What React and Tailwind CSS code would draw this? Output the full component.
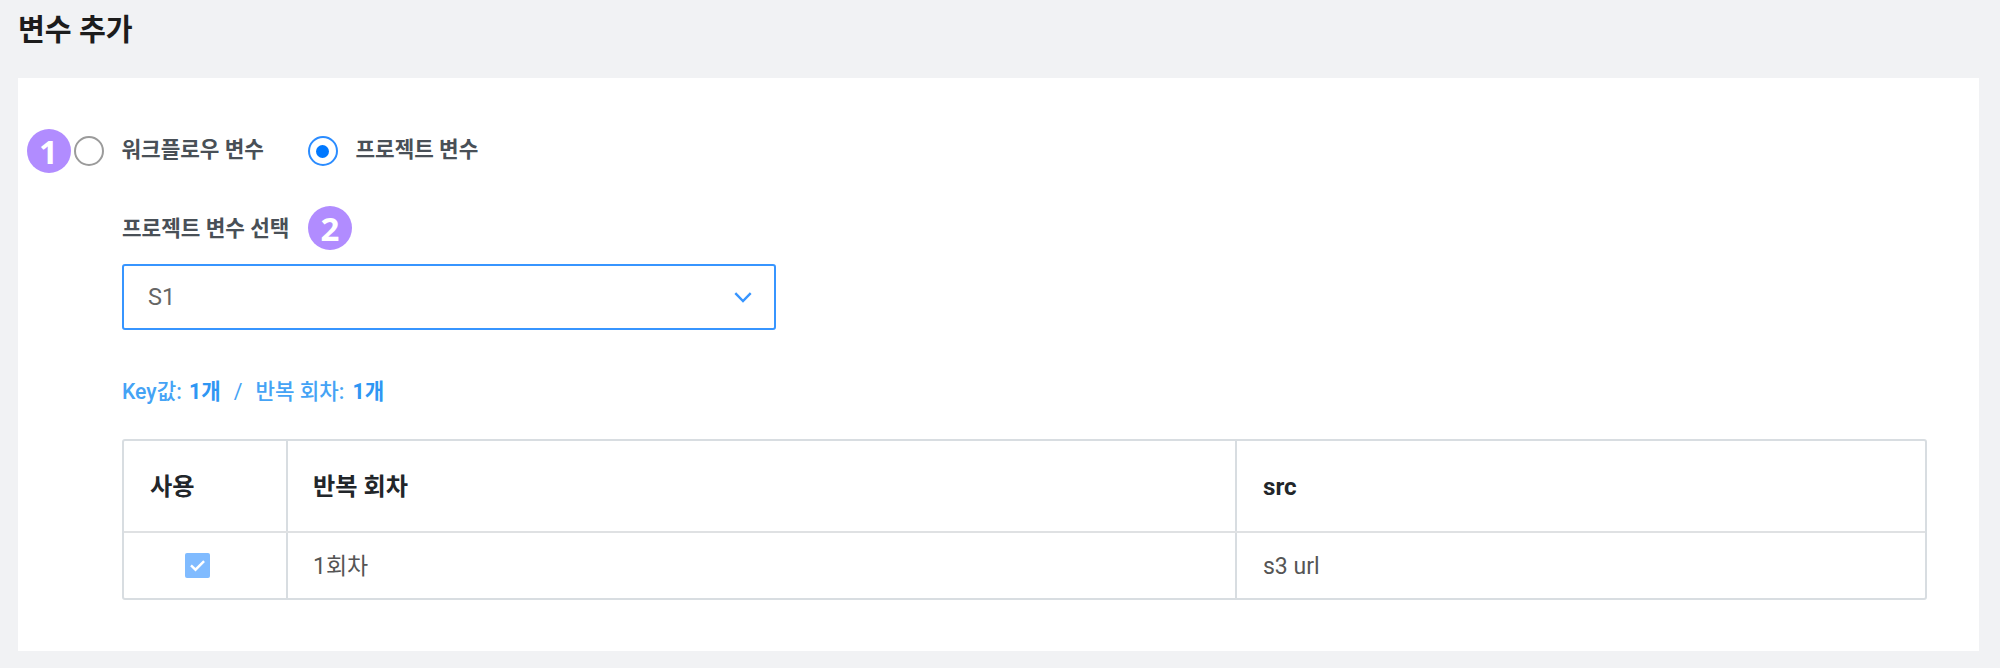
import React from "react";

function StepBadge({ children }) {
  return (
    <span className="flex size-11 shrink-0 items-center justify-center rounded-full bg-[#b18cff] pt-[2px] pr-[1px] font-['Noto_Sans','Open_Sans',sans-serif] text-[33px] leading-[42px] font-bold text-white">
      {children}
    </span>
  );
}

function Radio({ label, checked }) {
  return (
    <label className="flex items-center">
      <span
        className={
          checked
            ? "flex size-[30px] shrink-0 items-center justify-center rounded-full border-2 border-[#2b8cff]"
            : "flex size-[30px] shrink-0 items-center justify-center rounded-full border-2 border-[#9b9b9b]"
        }
      >
        {checked && <span className="size-[13px] rounded-full bg-[#0078ff]" />}
      </span>
      <span className="ml-[17.5px] pb-[3px] text-[21.3px] leading-8 font-bold whitespace-nowrap text-[#495057]">{label}</span>
    </label>
  );
}

export default function App() {
  return (
    <main className="h-[668px] w-[2000px] overflow-hidden bg-[#f1f2f4] pl-[18px] font-[Roboto,'Noto_Sans_CJK_KR',sans-serif]">
      <h1 className="flex h-[78px] items-start pt-[10px] text-[29.2px] leading-10 font-bold text-[#1c1c1c]">변수 추가</h1>
      <section className="h-[573px] w-[1961px] bg-white pt-[51px]">
        <div className="flex h-11 items-center pl-[9px]">
          <StepBadge>1</StepBadge>
          <div className="ml-[3px] flex gap-11">
            <Radio label="워크플로우 변수" />
            <Radio label="프로젝트 변수" checked />
          </div>
        </div>

        <div className="w-[1909px] pl-[104px]">
          <div className="mt-[33px] flex h-11 items-center">
            <span className="pt-[2px] text-[21.3px] leading-8 font-bold text-[#495057]">프로젝트 변수 선택</span>
            <span className="ml-[19px]">
              <StepBadge>2</StepBadge>
            </span>
          </div>

          <button className="mt-[14px] flex h-[66px] w-[654px] items-center justify-between rounded-[3px] border-2 border-[#3795ff] pr-[21px] pl-6">
            <span className="pb-[1px] text-[23.5px] leading-8 text-[#666666]">S1</span>
            <svg viewBox="0 0 20 20" className="size-5" fill="none" stroke="#3795ff" strokeWidth="2.4">
              <path d="M2.3 6.2 10 14l7.7-7.8" />
            </svg>
          </button>

          <p className="mt-[46px] flex h-8 items-center text-[21.2px] leading-8 font-medium whitespace-pre text-[#45a3f5]">
            <span>Key값: </span>
            <b className="ml-[2px] font-bold text-[#2e96f3]">1개</b>
            <span className="mx-[13px] font-normal">/</span>
            <span>반복 회차: </span>
            <b className="ml-[3px] font-bold text-[#2e96f3]">1개</b>
          </p>

          <div className="mt-[31px] h-[161px] w-[1805px] overflow-hidden rounded-[3px] border-2 border-[#d8dde1]">
            <div className="grid h-[92px] grid-cols-[164px_949px_1fr] border-b-2 border-[#dfe1e3] text-[24.2px] font-bold text-[#22262a]">
              <div className="flex items-center border-r-2 border-[#d8dde1] pt-[2px] pl-[26px]">사용</div>
              <div className="flex items-center border-r-2 border-[#d8dde1] pt-[2px] pl-[25px]">반복 회차</div>
              <div className="flex items-center pt-[3px] pl-[26px]">src</div>
            </div>
            <div className="grid h-[65px] grid-cols-[164px_949px_1fr] text-[23px] text-[#555555]">
              <div className="flex items-center justify-center border-r-2 border-[#d8dde1] pr-[15px]">
                <span className="flex size-[25px] items-center justify-center rounded-[2px] bg-[#80bbff]">
                  <svg viewBox="0 0 25 25" className="size-[25px]" fill="none" stroke="white" strokeWidth="2.4">
                    <path d="m6 12.4 4.5 4.3 8.6-8.6" />
                  </svg>
                </span>
              </div>
              <div className="flex items-center border-r-2 border-[#d8dde1] pt-[3px] pl-[25px]">1회차</div>
              <div className="flex items-center pt-[3px] pl-[26px]">s3 url</div>
            </div>
          </div>
        </div>
      </section>
    </main>
  );
}
